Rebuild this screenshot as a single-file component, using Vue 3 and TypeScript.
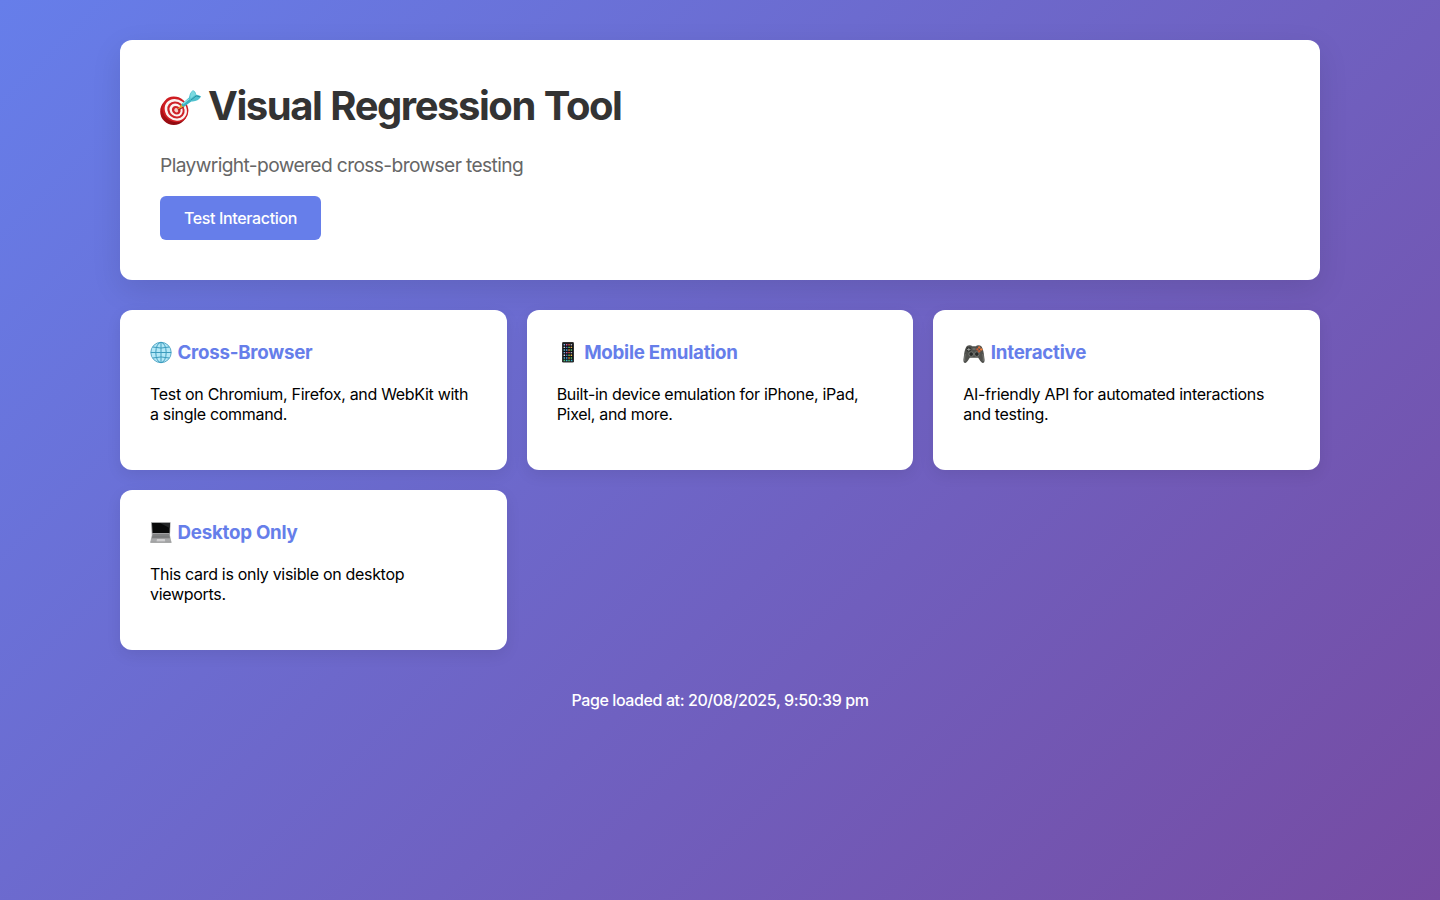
<script setup lang="ts">
interface Card {
  icon: 'globe' | 'phone' | 'gamepad' | 'laptop'
  title: string
  lines: string[]
}

const cards: Card[] = [
  { icon: 'globe', title: 'Cross-Browser', lines: ['Test on Chromium, Firefox, and WebKit with', 'a single command.'] },
  { icon: 'phone', title: 'Mobile Emulation', lines: ['Built-in device emulation for iPhone, iPad,', 'Pixel, and more.'] },
  { icon: 'gamepad', title: 'Interactive', lines: ['AI-friendly API for automated interactions', 'and testing.'] },
  { icon: 'laptop', title: 'Desktop Only', lines: ['This card is only visible on desktop', 'viewports.'] },
]

const appColors: string[] = ['#5fc46a', '#d8d8d8', '#4aa3e0', '#e2574c', '#e9b949', '#7fb8e8', '#3f6fc4', '#ef8b3a', '#b4b4bc', '#58b9d1', '#d65a9a', '#6fcf60']
</script>

<template>
  <div class="page">
    <div class="container">
      <header class="hero">
        <h1>
          <svg class="dart" viewBox="0 0 42 40" width="42" height="40" aria-hidden="true">
            <defs>
              <linearGradient id="rim" x1="0" y1="0" x2="0.5" y2="1">
                <stop offset="0" stop-color="#c9151b" />
                <stop offset="1" stop-color="#8e0a10" />
              </linearGradient>
            </defs>
            <ellipse cx="13.8" cy="23.4" rx="13.6" ry="13.6" fill="url(#rim)" />
            <g transform="rotate(40 15.8 21.8)">
              <ellipse cx="15.2" cy="21.8" rx="13.6" ry="12.2" fill="#cf1d22" />
              <ellipse cx="15.8" cy="21.8" rx="11.6" ry="10.4" fill="#fbf4f2" />
              <ellipse cx="16" cy="21.8" rx="9.1" ry="8.1" fill="#cf2329" />
              <ellipse cx="16.2" cy="21.8" rx="6.9" ry="6.1" fill="#fbf4f2" />
              <ellipse cx="16.4" cy="21.8" rx="4.6" ry="4" fill="#cf2329" />
              <ellipse cx="16.5" cy="21.8" rx="2.2" ry="1.9" fill="#f3cfc8" />
            </g>
            <path d="M18 22.2 24 18.6" stroke="#a31519" stroke-width="1.2" />
            <path d="M17.3 21.4 22 15.8 24.3 18.2Z" fill="#e2a62c" />
            <path d="M21.7 15.9 30.2 8.5 33.3 12 24.4 18.5Q21.6 18.7 21.7 15.9Z" fill="#39b2c2" />
            <path d="M22.8 16 31 9.4" stroke="#8ce0e6" stroke-width="1.2" />
            <path d="M29.2 11.5Q28.4 5.6 33 2.2Q36 3.4 36 6.4Q38.9 6.6 41.2 8.6Q37.6 14 31.6 13.4Z" fill="#4fc1ce" />
            <path d="M30.4 10.8 36 6.4 33 2.2Q29.6 5.6 30.4 10.8Z" fill="#7bdae0" />
            <path d="M30.8 12.2 36.2 7.9 40 8.9" fill="none" stroke="#248c9c" stroke-width="0.9" />
          </svg>
          <span>Visual Regression Tool</span>
        </h1>
        <p class="subtitle">Playwright-powered cross-browser testing</p>
        <button type="button" class="action">Test Interaction</button>
      </header>

      <main class="grid">
        <section v-for="card in cards" :key="card.title" class="card">
          <h3>
            <svg v-if="card.icon === 'globe'" class="icon" viewBox="0 0 22 24" width="22" height="24" aria-hidden="true">
              <circle cx="11" cy="11.5" r="10.2" fill="#b4e8f7" stroke="#58a9c8" stroke-width="1" />
              <g fill="none" stroke="#3c9cbe" stroke-width="1">
                <ellipse cx="11" cy="11.5" rx="5.2" ry="10.2" />
                <path d="M11 1.3V21.7M.8 11.5H21.2M2.7 6Q11 8.1 19.3 6M2.7 17Q11 14.9 19.3 17" />
              </g>
            </svg>
            <svg v-else-if="card.icon === 'phone'" class="icon" viewBox="0 0 22 24" width="22" height="24" aria-hidden="true">
              <rect x="5" y="1" width="12" height="20.6" rx="1.4" fill="#30302f" />
              <rect x="6" y="2.4" width="10" height="18" fill="#101116" />
              <rect
                v-for="n in 24"
                :key="n"
                :x="6.6 + ((n - 1) % 4) * 2.35"
                :y="3 + Math.floor((n - 1) / 4) * 2.65"
                width="1.5"
                height="1.4"
                rx="0.3"
                :fill="appColors[(n * 5) % appColors.length]"
              />
              <path d="M6.6 19.5H8.2M11.3 19.5H12.8" stroke="#54c978" stroke-width="1.6" />
              <path d="M9 19.5H10.5M13.8 19.5H15.4" stroke="#3cb8c9" stroke-width="1.6" />
            </svg>
            <svg v-else-if="card.icon === 'gamepad'" class="icon" viewBox="0 0 22 24" width="22" height="24" aria-hidden="true">
              <path d="M4 5Q5.5 3.8 8.3 4.5L9 5.3H13L13.8 4.5Q16.5 3.8 18 5Q19.8 6.5 20.8 12.5L21.6 19Q21.6 22.6 19 21.8Q17.4 20.5 15.2 16.7H6.8Q4.6 20.5 3 21.8Q.4 22.6.4 19L1.2 12.5Q2.2 6.5 4 5Z" fill="#50514d" />
              <path d="M2.2 13Q1.2 17 1.8 20M19.8 13Q20.8 17 20.2 20" fill="none" stroke="#71736e" stroke-width="1.2" />
              <circle cx="5.8" cy="8.5" r="2.4" fill="#303230" />
              <path d="M5.8 6.8V10.2M4.1 8.5H7.5" stroke="#9b9e99" stroke-width="0.9" />
              <circle cx="8.2" cy="13.1" r="2.3" fill="#282a28" stroke="#8a8c86" stroke-width="0.7" />
              <circle cx="13.8" cy="13.1" r="2.3" fill="#282a28" stroke="#8a8c86" stroke-width="0.7" />
              <path d="M9.5 8H12.5" stroke="#939691" stroke-width="0.8" />
              <circle cx="16.2" cy="6.4" r="1.2" fill="#e0703a" />
              <circle cx="18.3" cy="8.4" r="1.2" fill="#f5803c" />
              <circle cx="16.2" cy="10.3" r="1.2" fill="#c55c32" />
              <circle cx="14.4" cy="8.4" r="1.1" fill="#d75c32" />
            </svg>
            <svg v-else class="icon" viewBox="0 0 22 24" width="22" height="24" aria-hidden="true">
              <path d="M1.1 1.2H20.5L20 14H1.9Z" fill="#898a8b" />
              <path d="M2 2H19.8L19.4 12H2.6Z" fill="#080909" />
              <path d="M10 2H19.8L19.6 7Z" fill="#242627" />
              <path d="M2.2 12.2H19.5L21.4 21H.3Z" fill="#a8a9aa" />
              <path d="M2.8 13.2H19L20 17.2H1.8Z" fill="#747576" />
              <path d="M2.5 14.6H19.5M2 16.1H20" stroke="#939495" stroke-width="0.5" />
              <path d="M7 18H14.8L15.2 20.4H6.5Z" fill="#cececf" />
              <path d="M.3 21.3H21.5" stroke="#858687" stroke-width="0.9" />
            </svg>
            <span>{{ card.title }}</span>
          </h3>
          <p><span v-for="line in card.lines" :key="line" class="line">{{ line }}</span></p>
        </section>
      </main>

      <footer>Page loaded at: 20/08/2025, 9:50:39 pm</footer>
    </div>
  </div>
</template>

<style>
body {
  margin: 0;
}
</style>

<style scoped>
.page {
  box-sizing: border-box;
  min-height: 100vh;
  padding: 40px 20px;
  background: linear-gradient(135deg, #667eea 0%, #764ba2 100%);
  font-family: Inter, "Liberation Sans", sans-serif;
  font-size: 16px;
  line-height: 20px;
  color: #000;
}

.container {
  max-width: 1200px;
  margin: 0 auto;
}

.hero {
  box-sizing: border-box;
  height: 240px;
  padding: 40px;
  margin-bottom: 30px;
  background: #fff;
  border-radius: 12px;
  box-shadow: 0 10px 30px rgba(0, 0, 0, 0.1);
}

h1 {
  display: flex;
  gap: 6px;
  height: 51px;
  margin: 0 0 22px;
  font-size: 40px;
  line-height: 51px;
  font-weight: 700;
  letter-spacing: -1.46px;
  word-spacing: 1px;
  color: #333;
  white-space: nowrap;
}

.dart {
  flex: none;
  margin-top: 8px;
}

.subtitle {
  height: 24px;
  margin: 0 0 19px;
  font-size: 19.2px;
  line-height: 24px;
  letter-spacing: -0.62px;
  color: #666;
}

.action {
  display: block;
  width: 161px;
  height: 44px;
  padding: 0;
  border: 0;
  border-radius: 6px;
  background: #667eea;
  color: #fff;
  font: inherit;
  font-weight: 450;
  letter-spacing: -0.36px;
}

.grid {
  display: grid;
  grid-template-columns: repeat(3, 1fr);
  grid-auto-rows: 160px;
  gap: 20px;
  margin-bottom: 40px;
}

.card {
  box-sizing: border-box;
  padding: 31px 30px 29px;
  background: #fff;
  border-radius: 12px;
  box-shadow: 0 5px 15px rgba(0, 0, 0, 0.08);
}

h3 {
  display: flex;
  gap: 5.5px;
  height: 24px;
  margin: 0 0 19px;
  font-size: 18.72px;
  line-height: 24px;
  font-weight: 700;
  letter-spacing: -0.24px;
  color: #667eea;
}

.icon {
  flex: none;
}

.card p {
  margin: 0;
  letter-spacing: -0.31px;
}

.line {
  display: block;
  white-space: nowrap;
}

footer {
  color: #fff;
  text-align: center;
  font-weight: 450;
  letter-spacing: -0.4px;
}
</style>
